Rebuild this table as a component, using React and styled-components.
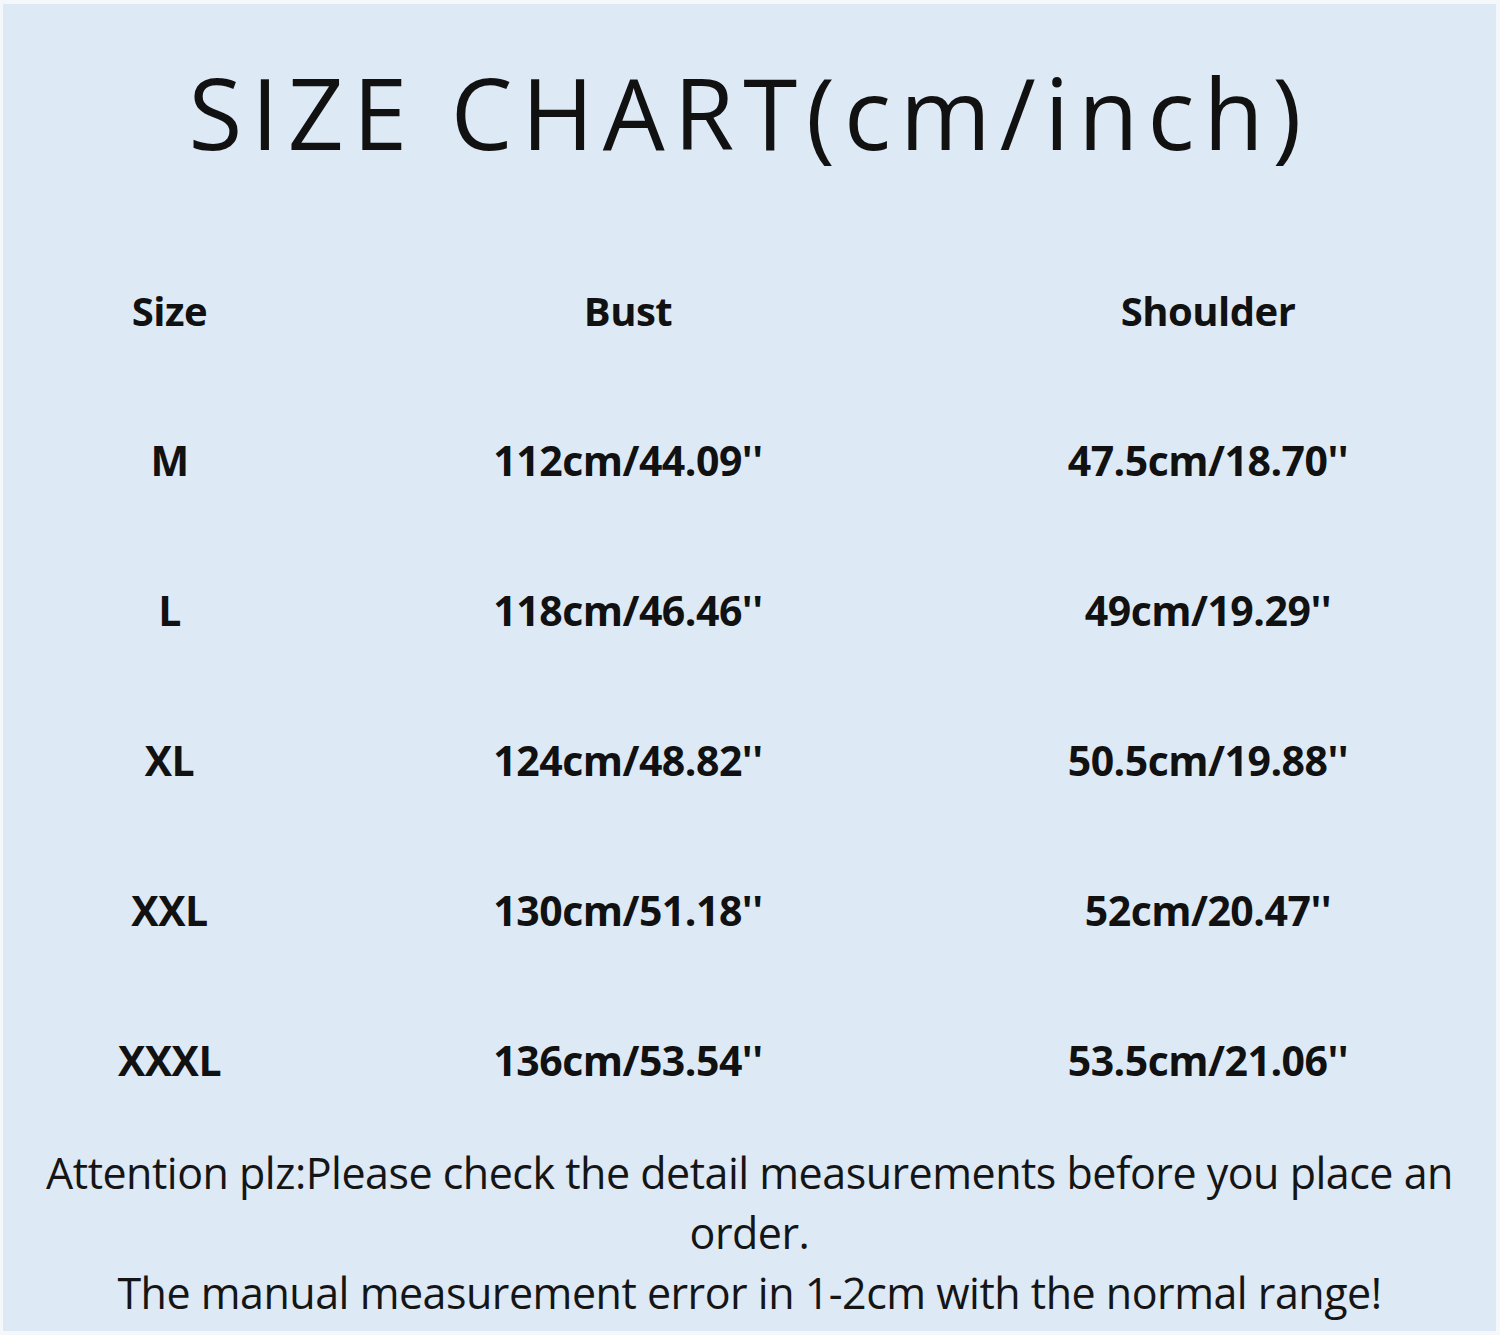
import React from 'react'
import styled, { createGlobalStyle } from 'styled-components'

const Global = createGlobalStyle`
    html, body {
        margin: 0;
        padding: 0;
        background: #f4f8fb;
    }
`

const Frame = styled.div`
    width: 1500px;
    height: 1335px;
    box-sizing: border-box;
    padding: 4px 4px 4px 3px;
    background: #f4f8fb;
`

const Sheet = styled.div`
    height: 100%;
    background: #dde9f5;
    display: flex;
    flex-direction: column;
`

const Title = styled.h1`
    margin: 0;
    height: 231px;
    padding-bottom: 15px;
    box-sizing: border-box;
    display: flex;
    align-items: center;
    justify-content: center;
    font-family: "Open Sans", "DejaVu Sans", sans-serif;
    font-weight: 400;
    font-size: 98px;
    letter-spacing: 9px;
    color: #111;
`

const Table = styled.div`
    display: grid;
    grid-template-columns: 333px 584px 1fr;
    grid-auto-rows: 150px;
`

const Cell = styled.div`
    display: flex;
    align-items: center;
    justify-content: center;
    font-family: "Open Sans", "Noto Sans", sans-serif;
    font-weight: 700;
    font-size: ${p => (p.$head ? '40px' : '41px')};
    letter-spacing: -0.5px;
    color: #111;
`

const Note = styled.p`
    margin: 0;
    padding-top: 8px;
    text-align: center;
    font-family: "Open Sans", "Noto Sans", sans-serif;
    font-size: 43px;
    line-height: 60px;
    letter-spacing: -0.5px;
    color: #151515;
`

const rows = [
    ['M', '112cm/44.09\'\'', '47.5cm/18.70\'\''],
    ['L', '118cm/46.46\'\'', '49cm/19.29\'\''],
    ['XL', '124cm/48.82\'\'', '50.5cm/19.88\'\''],
    ['XXL', '130cm/51.18\'\'', '52cm/20.47\'\''],
    ['XXXL', '136cm/53.54\'\'', '53.5cm/21.06\'\''],
]

export default function App() {
    return (
        <Frame>
            <Global />
            <Sheet>
                <Title>SIZE CHART(cm/inch)</Title>
                <Table>
                    <Cell $head>Size</Cell>
                    <Cell $head>Bust</Cell>
                    <Cell $head>Shoulder</Cell>
                    {rows.map(r => r.map((v, i) => <Cell key={r[0] + i}>{v}</Cell>))}
                </Table>
                <Note>
                    Attention plz:Please check the detail measurements before you place an<br />
                    order.<br />
                    The manual measurement error in 1-2cm with the normal range!
                </Note>
            </Sheet>
        </Frame>
    )
}
